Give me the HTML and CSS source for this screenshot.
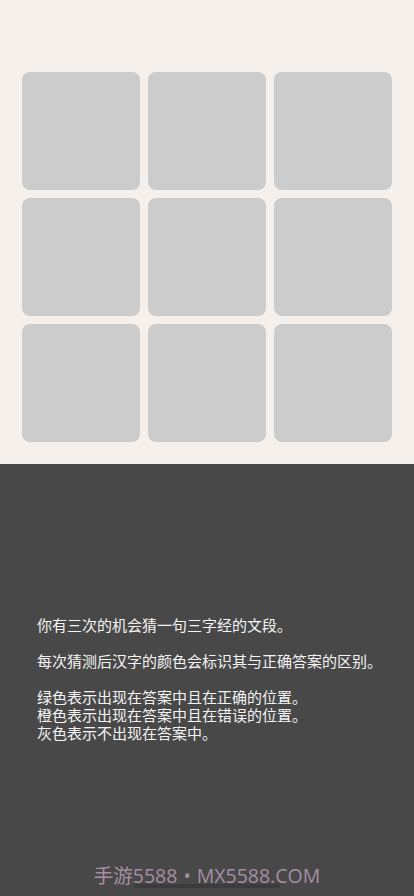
FILE: index.html
```html
<!DOCTYPE html>
<html lang="zh">
<head>
    <meta charset="UTF-8">
    <meta name="viewport" content="width=device-width, initial-scale=1.0">
    <title>三字经猜字</title>
    <link rel="stylesheet" href="styles.css">
</head>
<body>
    <div class="board">
        <div class="grid">
            <div class="tile"></div>
            <div class="tile"></div>
            <div class="tile"></div>
            <div class="tile"></div>
            <div class="tile"></div>
            <div class="tile"></div>
            <div class="tile"></div>
            <div class="tile"></div>
            <div class="tile"></div>
        </div>
    </div>
    <div class="rules">
        <p class="intro">你有三次的机会猜一句三字经的文段。<br><br>每次猜测后汉字的颜色会标识其与正确答案的区别。<br><br>绿色表示出现在答案中且在正确的位置。<br>橙色表示出现在答案中且在错误的位置。<br>灰色表示不出现在答案中。</p>
        <div class="mark">手游5588<span class="dot">•</span>MX5588.COM</div>
        <div class="bar"></div>
    </div>
</body>
</html>
```

FILE: styles.css
```css
* {
    margin: 0;
    padding: 0;
    box-sizing: border-box;
}
body {
    width: 414px;
    height: 896px;
    overflow: hidden;
    background-color: #484848;
    font-family: "Noto Sans CJK SC", "Noto Sans", sans-serif;
}
.board {
    height: 464px;
    background-color: #f5f0eb;
    padding: 72px 22px 0;
}
.grid {
    display: grid;
    grid-template-columns: repeat(3, 118px);
    grid-auto-rows: 118px;
    gap: 8px;
}
.tile {
    background-color: #cccccc;
    border-radius: 8px;
}
.rules {
    position: relative;
    height: 432px;
    padding: 152px 16px 0 37px;
    color: #f4f4f4;
}
.intro {
    font-size: 15px;
    line-height: 18px;
    white-space: nowrap;
}
.mark {
    position: absolute;
    left: 0;
    right: 0;
    top: 396px;
    text-align: center;
    font-family: "Open Sans", "Noto Sans CJK SC", sans-serif;
    font-size: 19.5px;
    color: #a48fa4;
}
.dot {
    margin: 0 6px;
}
.bar {
    position: absolute;
    left: 134px;
    top: 420px;
    width: 146px;
    height: 4px;
    border-radius: 2px;
    background-color: #3c3c3c;
}
```
